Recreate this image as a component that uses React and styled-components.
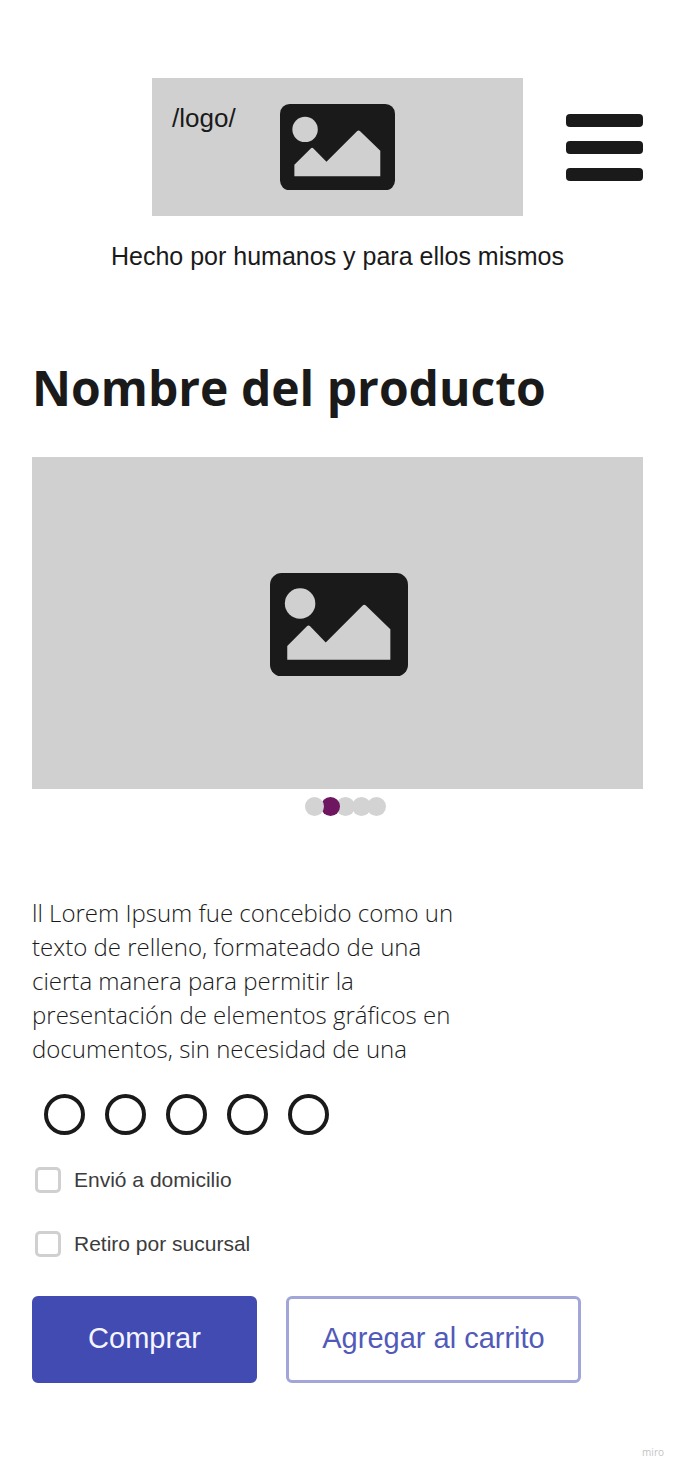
import React, { useState } from "react";
import styled, { createGlobalStyle } from "styled-components";

const GlobalStyle = createGlobalStyle`
  *, *::before, *::after { box-sizing: border-box; }
  body {
    margin: 0;
    background: #ffffff;
    color: #1a1a1a;
    font-family: "Liberation Sans", Arial, sans-serif;
  }
  h1, p, fieldset { margin: 0; padding: 0; border: 0; min-width: 0; }
  button, input { margin: 0; font-family: inherit; }
`;

const Page = styled.div`
  padding: 78px 36px 0 32px;
`;

const Header = styled.header`
  display: grid;
  grid-template-columns: 1fr minmax(0, 371px) 1fr;
  align-items: center;
`;

const Logo = styled.a`
  grid-column: 2;
  display: grid;
  grid-template-columns: 1fr auto 1fr;
  align-items: center;
  height: 138px;
  background: #d0d0d0;
  color: inherit;
  text-decoration: none;
`;

const LogoText = styled.span`
  align-self: start;
  padding: 25px 0 0 20px;
  font-size: 26px;
  line-height: 30px;
`;

const MenuButton = styled.button`
  justify-self: end;
  display: flex;
  flex-direction: column;
  gap: 14px;
  width: 77px;
  padding: 0;
  border: 0;
  background: none;
  cursor: pointer;
`;

const MenuBar = styled.span`
  height: 13px;
  border-radius: 4px;
  background: #1a1a1a;
`;

const Tagline = styled.p`
  margin-top: 25px;
  font-size: 25px;
  line-height: 30px;
  text-align: center;
`;

const Title = styled.h1`
  margin-top: 84px;
  font-family: "Open Sans", sans-serif;
  font-size: 48px;
  font-weight: 700;
  line-height: 66px;
`;

const Gallery = styled.section`
  margin-top: 36px;
`;

const Slide = styled.div`
  display: flex;
  align-items: center;
  justify-content: center;
  aspect-ratio: 611 / 332;
  padding: 3px 0 0 2px;
  background: #d0d0d0;
`;

const Picture = styled.svg`
  display: block;
  width: ${({ $width }) => $width}px;
  height: auto;
`;

const Dots = styled.div`
  display: grid;
  grid-template-columns: repeat(5, minmax(0, 1fr));
  width: 91px;
  margin: 8px auto 0;
  padding-left: 13px;
`;

const Dot = styled.button`
  position: relative;
  z-index: ${({ $layer }) => $layer};
  width: 19px;
  height: 19px;
  padding: 0;
  border: 0;
  border-radius: 50%;
  background: ${({ $active }) => ($active ? "#6f1660" : "#d3d3d3")};
  cursor: pointer;
`;

const Description = styled.p`
  max-width: 440px;
  margin-top: 80px;
  font-family: "Open Sans", sans-serif;
  font-size: 24px;
  font-weight: 340;
  line-height: 34px;
`;

const Rating = styled.fieldset`
  display: flex;
  gap: 20px;
  margin-top: 28px;
  padding-left: 12px;
`;

const RatingOption = styled.input`
  appearance: none;
  width: 41px;
  height: 41px;
  border: 4px solid #1a1a1a;
  border-radius: 50%;
  cursor: pointer;
  &:checked { background: #d0d0d0; }
`;

const Delivery = styled.fieldset`
  display: flex;
  flex-direction: column;
  gap: 38px;
  margin-top: 32px;
  padding-left: 3px;
`;

const Option = styled.label`
  display: flex;
  align-items: center;
  gap: 13px;
  color: #3c3c3c;
  font-size: 21px;
  line-height: 26px;
  cursor: pointer;
`;

const Checkbox = styled.input`
  appearance: none;
  width: 26px;
  height: 26px;
  border: 3px solid #d0d0d0;
  border-radius: 5px;
  cursor: pointer;
  &:checked { background: #424bb2; }
`;

const Actions = styled.div`
  display: flex;
  gap: 29px;
  margin-top: 39px;
`;

const Action = styled.button`
  flex: 0 1 ${({ $width }) => $width}px;
  height: 87px;
  padding: 0 0 4px;
  border: 3px solid ${({ $primary }) => ($primary ? "#424bb2" : "#a1a5d8")};
  border-radius: 6px;
  background: ${({ $primary }) => ($primary ? "#424bb2" : "#ffffff")};
  color: ${({ $primary }) => ($primary ? "#f4f5ff" : "#525ab9")};
  font-size: 29px;
  line-height: 34px;
  cursor: pointer;
`;

const Footer = styled.footer`
  padding: 61px 15px 11px 0;
  color: #c4c4c8;
  font-family: "Open Sans", sans-serif;
  font-size: 10px;
  line-height: 16px;
  text-align: right;
`;

const PictureIcon = ({ width }) => (
  <Picture $width={width} viewBox="0 0 344 258" aria-hidden="true">
    <rect width="344" height="258" rx="29" fill="#1a1a1a" />
    <circle cx="75" cy="76" r="38" fill="#d0d0d0" />
    <path
      d="M43 216V182L92 133Q96 129 100 133L139 173L231 81Q235 77 239 81L300 140V216Z"
      fill="#d0d0d0"
    />
  </Picture>
);

const slides = [0, 1, 2, 3, 4];
const stars = [1, 2, 3, 4, 5];
const deliveryOptions = ["Envió a domicilio", "Retiro por sucursal"];

export default function App() {
  const [slide, setSlide] = useState(1);

  return (
    <>
      <GlobalStyle />
      <Page>
        <Header>
          <Logo href="#">
            <LogoText>/logo/</LogoText>
            <PictureIcon width={115} />
          </Logo>
          <MenuButton type="button" aria-label="Menú">
            <MenuBar />
            <MenuBar />
            <MenuBar />
          </MenuButton>
        </Header>
        <Tagline>Hecho por humanos y para ellos mismos</Tagline>
        <main>
          <Title>Nombre del producto</Title>
          <Gallery aria-label="Imágenes">
            <Slide>
              <PictureIcon width={138} />
            </Slide>
            <Dots>
              {slides.map((n) => (
                <Dot
                  key={n}
                  type="button"
                  aria-label={`Imagen ${n + 1}`}
                  $active={n === slide}
                  $layer={n === 0 ? 2 : n === slide ? 1 : 0}
                  onClick={() => setSlide(n)}
                />
              ))}
            </Dots>
          </Gallery>
          <Description>
            ll Lorem Ipsum fue concebido como un texto de relleno, formateado de
            una cierta manera para permitir la presentación de elementos
            gráficos en documentos, sin necesidad de una
          </Description>
          <Rating aria-label="Calificación">
            {stars.map((n) => (
              <RatingOption
                key={n}
                type="radio"
                name="rating"
                value={n}
                aria-label={`${n} de 5`}
              />
            ))}
          </Rating>
          <Delivery aria-label="Entrega">
            {deliveryOptions.map((label) => (
              <Option key={label}>
                <Checkbox type="checkbox" />
                {label}
              </Option>
            ))}
          </Delivery>
          <Actions>
            <Action type="button" $primary $width={225}>
              Comprar
            </Action>
            <Action type="button" $width={295}>
              Agregar al carrito
            </Action>
          </Actions>
        </main>
      </Page>
      <Footer>miro</Footer>
    </>
  );
}
